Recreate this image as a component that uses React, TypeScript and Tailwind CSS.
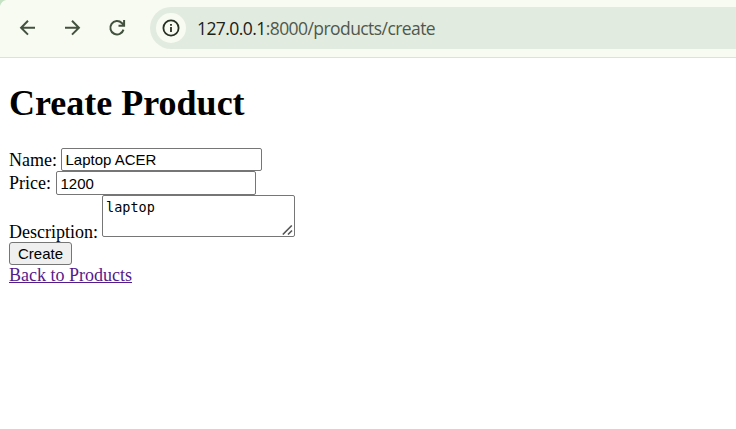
const serif = "font-['Liberation_Serif',serif]";
const sans = "font-['Liberation_Sans',sans-serif]";

function Toolbar() {
  return (
    <header className="relative flex h-[58px] items-start border-b border-[#d9e3d8] bg-[#f8fbf2] pt-[7px]">
      <svg className="absolute left-0 top-0" width="6" height="6" viewBox="0 0 6 6">
        <path d="M0 0H6Q1.500 1 0 6Z" fill="#c5e3c4" />
      </svg>
      <nav className="flex h-[42px] w-[150px] shrink-0 items-center text-[#43523f]">
        <svg className="ml-[17px]" width="22" height="22" viewBox="0 0 22 22" fill="none" stroke="currentColor" strokeWidth="2">
          <path d="M18 10.700H4.500M11 3.800L4.100 10.700L11 17.600" />
        </svg>
        <svg className="ml-[22px]" width="22" height="22" viewBox="0 0 22 22" fill="none" stroke="currentColor" strokeWidth="2">
          <path d="M4 10.700H17.500M11 3.800L17.900 10.700L11 17.600" />
        </svg>
        <svg className="ml-[23px]" width="22" height="22" viewBox="0 0 22 22" fill="none" stroke="currentColor" strokeWidth="2">
          <path d="M17.500 12.600A6.700 6.700 0 1 1 15.800 6L17.600 7.800M18.100 3.100V8.700H12.500" />
        </svg>
      </nav>
      <div className="flex h-[42px] grow items-center rounded-l-full bg-[#e2ebdf] pl-[6px]">
        <span className="flex size-[30px] items-center justify-center rounded-full bg-[#f8fbf2]">
          <svg width="18" height="18" viewBox="0 0 18 18" fill="none" stroke="#263023" strokeWidth="1.8">
            <circle cx="9" cy="9" r="7.600" />
            <path d="M9 8V12.900M9 5V6.800" />
          </svg>
        </span>
        <span className="ml-[11px] whitespace-nowrap font-['Open_Sans',sans-serif] text-[17.5px] leading-6 tracking-[-0.57px] text-[#50584d]">
          <span className="text-[#1c211a]">127.0.0.1</span>:8000/products/create
        </span>
      </div>
    </header>
  );
}

export default function App() {
  return (
    <div className={`h-[429px] overflow-hidden bg-white text-[18px] leading-[20px] text-black ${serif}`}>
      <Toolbar />
      <main className="pl-[9px] pt-[25px]">
        <h1 className="text-[36px] font-bold leading-[41px]">Create Product</h1>
        <form className="pt-6" onSubmit={(e) => e.preventDefault()}>
          <div className="flex h-[23px] items-center">
            <label htmlFor="name" className="w-[52px] whitespace-nowrap">Name:</label>
            <input id="name" defaultValue="Laptop ACER" className={`h-[23px] w-[201px] rounded-[2px] border border-[#767676] px-[3.5px] text-[15px] ${sans}`} />
          </div>
          <div className="flex h-6 items-center">
            <label htmlFor="price" className="w-[47px] whitespace-nowrap">Price:</label>
            <input id="price" defaultValue="1200" className={`h-6 w-[200px] rounded-[2px] border border-[#767676] px-[3.5px] pt-px text-[15px] ${sans}`} />
          </div>
          <div className="flex h-[47px] items-start">
            <label htmlFor="description" className="w-[93px] whitespace-nowrap pt-[27px]">Description:</label>
            <div className="relative">
              <textarea id="description" defaultValue="laptop" className="block h-[42px] w-[193px] resize-none rounded-[2px] border border-[#767676] px-[3px] py-[2px] font-['DejaVu_Sans_Mono',monospace] text-[13.5px] leading-[18px]" />
              <svg className="pointer-events-none absolute bottom-[2px] right-[2px]" width="11" height="10" viewBox="0 0 11 10" stroke="#555" strokeWidth="1.6">
                <path d="M0.800 9.500L9.800 0.500M6 9.500L10 5.500" />
              </svg>
            </div>
          </div>
          <button className={`block h-[23px] w-[63px] rounded-[3px] border border-[#767676] bg-[#efefef] text-[15px] leading-[20px] ${sans}`}>Create</button>
        </form>
        <a href="#" className="block w-fit text-[#551a8b] underline">Back to Products</a>
      </main>
    </div>
  );
}
